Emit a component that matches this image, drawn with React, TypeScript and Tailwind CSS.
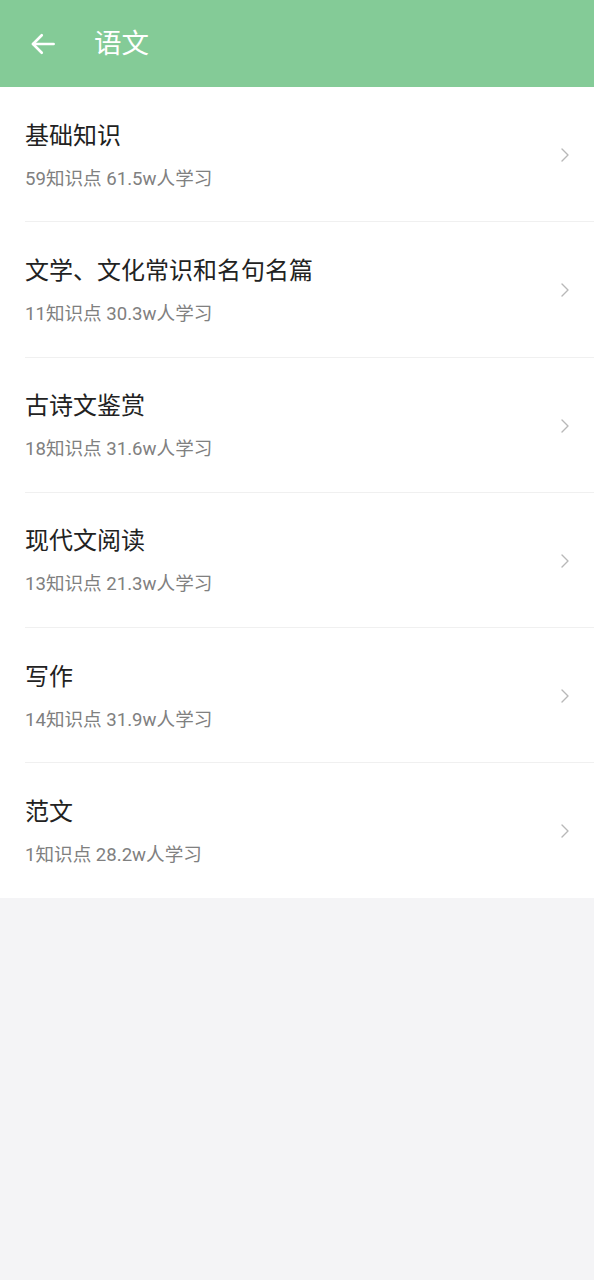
import React from 'react';

const items = [
    { title: '基础知识', points: 59, learners: '61.5w' },
    { title: '文学、文化常识和名句名篇', points: 11, learners: '30.3w' },
    { title: '古诗文鉴赏', points: 18, learners: '31.6w' },
    { title: '现代文阅读', points: 13, learners: '21.3w' },
    { title: '写作', points: 14, learners: '31.9w' },
    { title: '范文', points: 1, learners: '28.2w' },
];

export default function App() {
    return (
        <div className="min-h-[1280px] bg-[#f4f4f6] font-['Roboto','Noto_Sans_CJK_SC',sans-serif]">
            <header className="h-[87px] bg-[#84cb97] flex items-center">
                <button className="ml-[27px] w-[32px] h-[32px] flex items-center justify-center text-white">
                    <svg width="30" height="30" viewBox="0 0 24 24" fill="none" stroke="currentColor" strokeWidth="2.1" strokeLinecap="round" strokeLinejoin="round">
                        <path d="M20.5 12H4" />
                        <path d="M11 5l-7 7 7 7" />
                    </svg>
                </button>
                <h1 className="ml-[35px] text-[27.5px] leading-none text-white">语文</h1>
            </header>

            <ul className="bg-white">
                {items.map((item, idx) => (
                    <li key={idx} className="pl-[25px]">
                        <div className={`flex items-center pt-[32.5px] pb-[30.8px] ${idx < items.length - 1 ? 'border-b border-[#f0f0f0]' : ''}`}>
                            <div className="flex-1 min-w-0">
                                <p className="text-[24px] leading-[32px] text-[#222]">{item.title}</p>
                                <p className="mt-[15px] text-[18.6px] leading-[24px] text-[#808080]">
                                    {item.points}知识点 {item.learners}人学习
                                </p>
                            </div>
                            <svg className="mr-[24px]" width="10" height="16" viewBox="0 0 10 16" fill="none" stroke="#b8b8b8" strokeWidth="1.4" strokeLinecap="round" strokeLinejoin="round">
                                <path d="M2 2l6 6-6 6" />
                            </svg>
                        </div>
                    </li>
                ))}
            </ul>
        </div>
    );
}
